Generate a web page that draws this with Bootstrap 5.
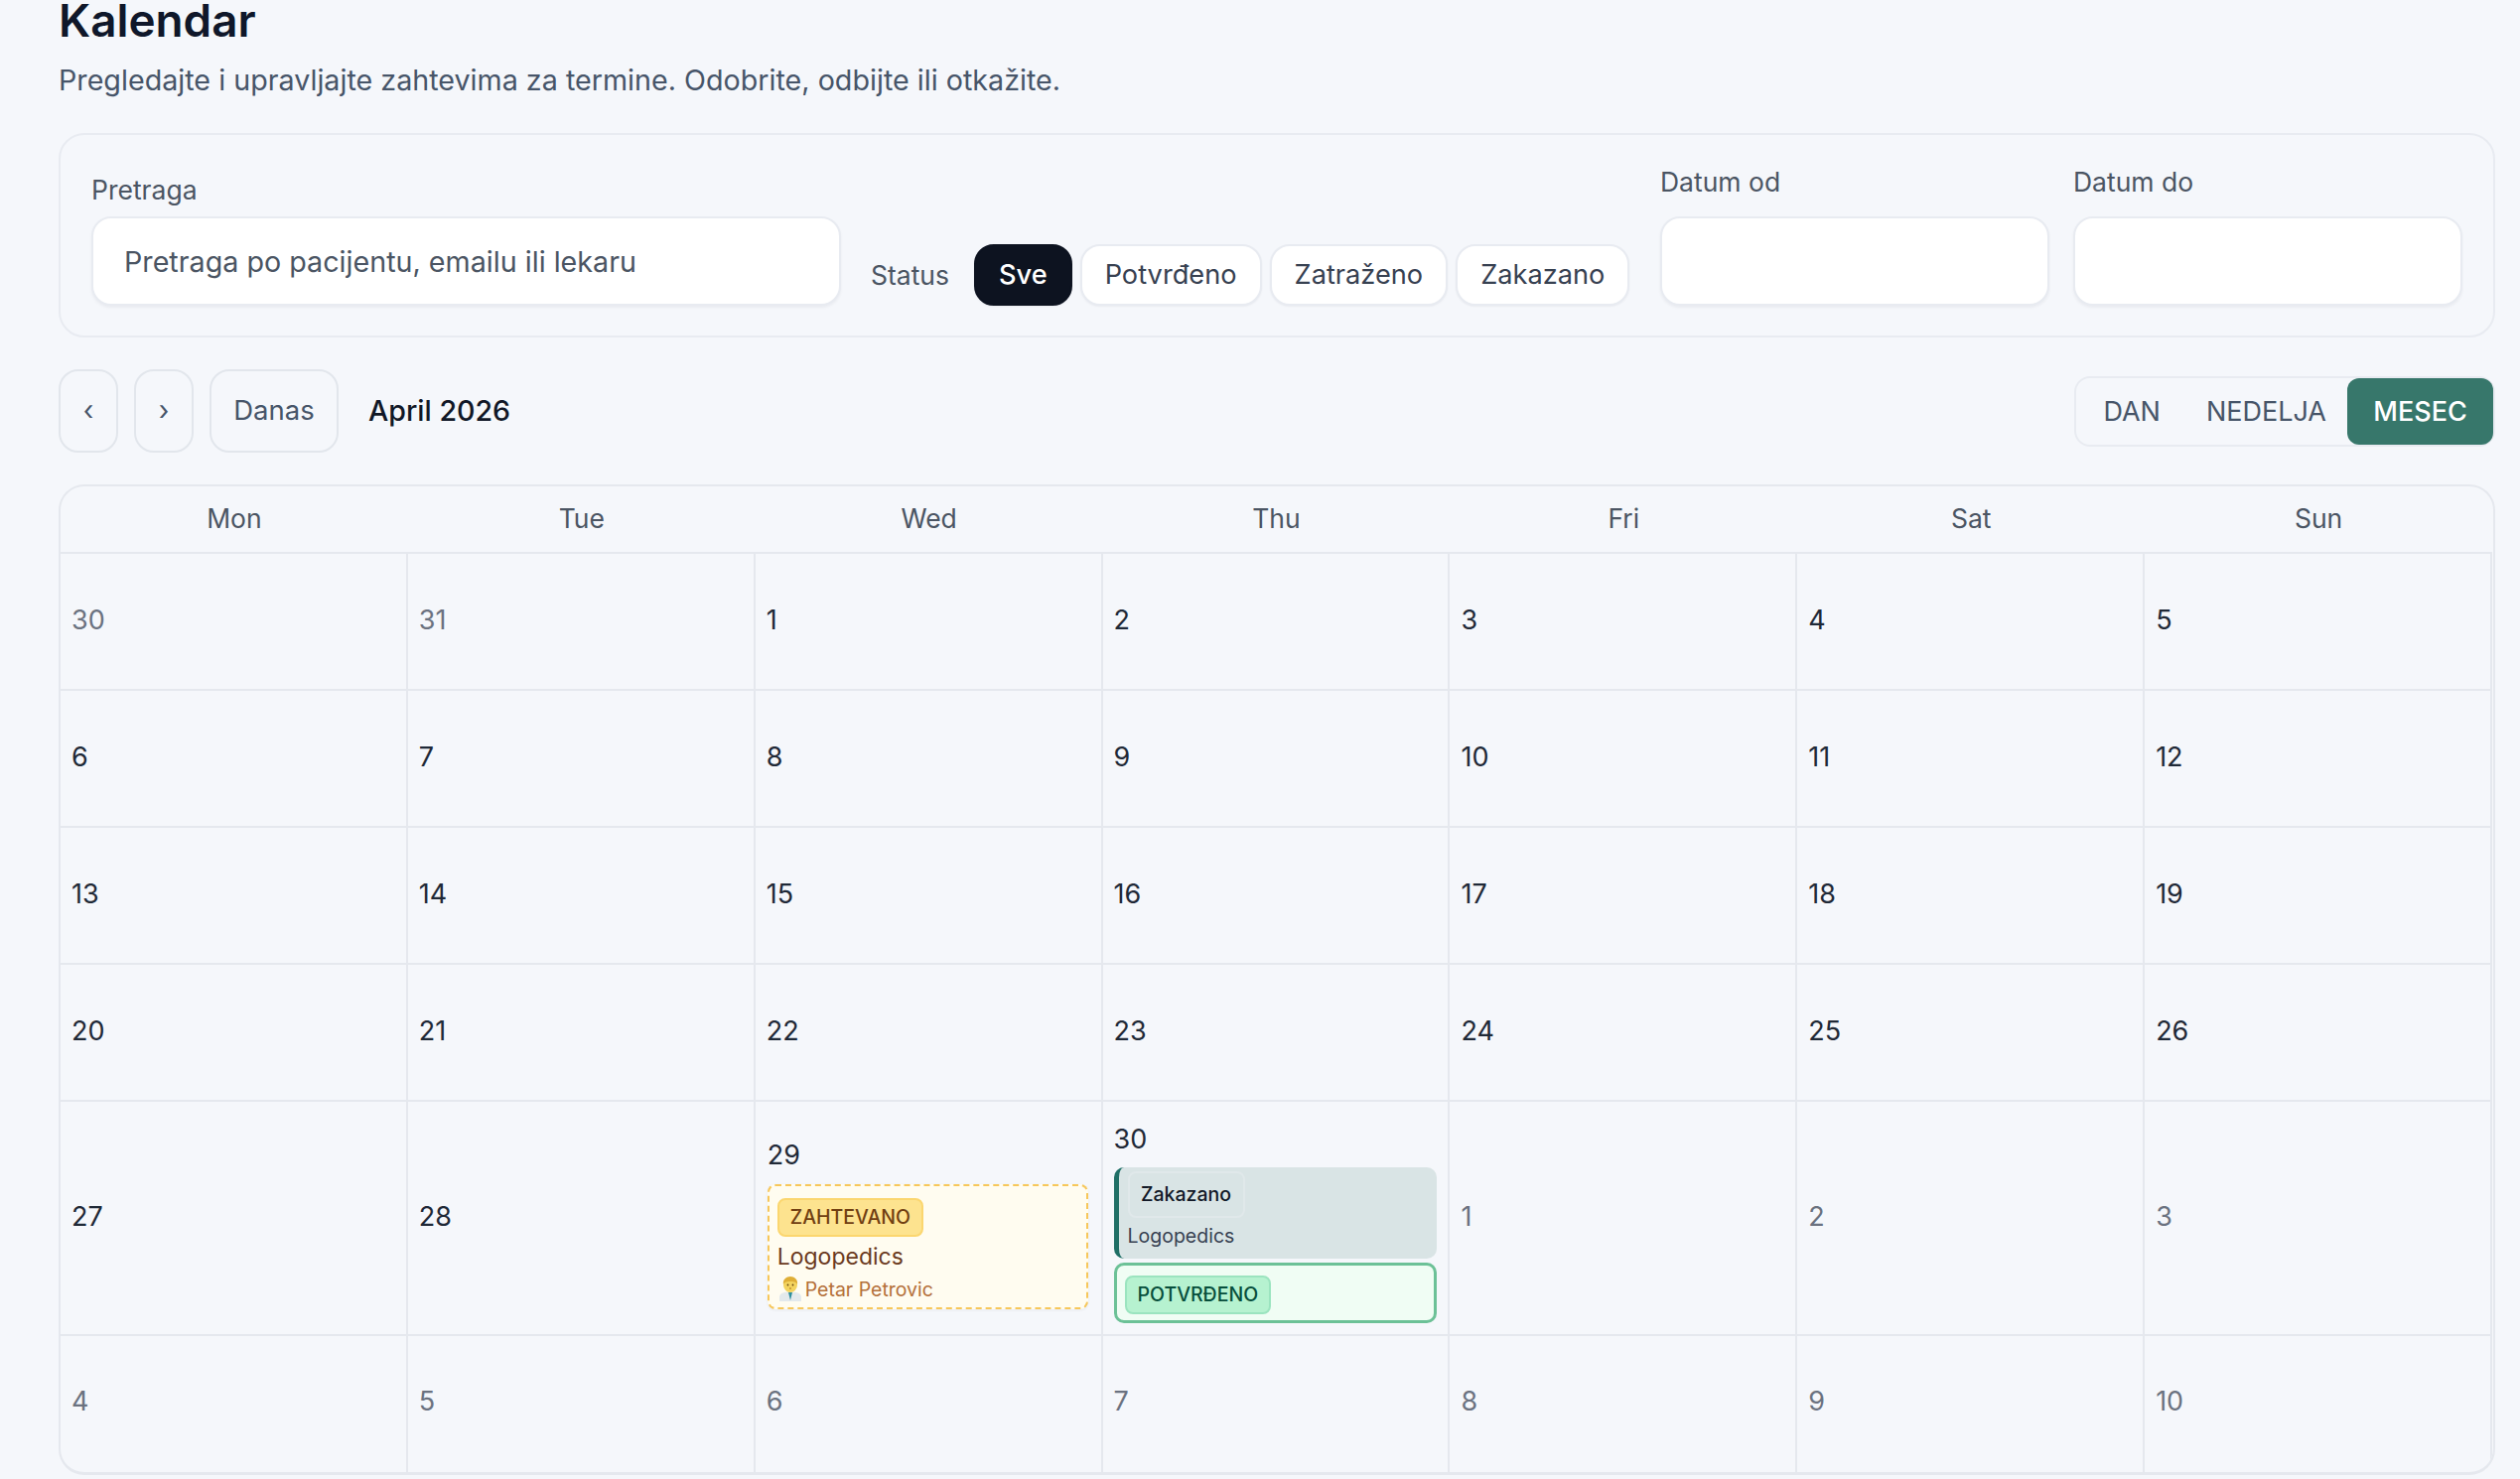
<!DOCTYPE html>
<html lang="sr">
<head>
<meta charset="utf-8">
<title>Kalendar</title>
<link href="https://cdn.jsdelivr.net/npm/bootstrap@5.3.0/dist/css/bootstrap.min.css" rel="stylesheet">
<style>
html,body{height:100%;overflow:hidden}
body{background:#f5f7fb;font-family:Inter,"Liberation Sans",sans-serif;color:#111827}
.page-wrap{padding:0 25px 0 59px}
.page-title{font-size:45.8px;font-weight:600;line-height:40px;margin:1px 0 0;color:#0f172a}
.page-sub{font-size:28.7px;line-height:40px;margin:20px 0 0;color:#475569}
.filter-panel{margin-top:33px;height:206px;border:2px solid #e8ebf1;border-radius:26px;padding:0 31px 30px 31px;background:#f5f7fb}
.field-label{font-size:26.5px;line-height:36px;color:#4b5563;margin:0}
.field-search{width:755px}
.field-search .field-label{margin-bottom:9px}
.field-date{width:392px}
.field-date .field-label{margin-bottom:17px}
.field-end{margin-left:24px}
.fld{height:90px;border:2px solid #e8ebf1;border-radius:20px;box-shadow:0 2px 3px rgba(15,23,42,.05);font-size:28.7px;padding:0 31px;color:#475569;background:#fff}
.fld::placeholder{color:#4b5563;opacity:1}
.status-wrap{gap:8px;margin-left:30px}
.status-lbl{font-size:26.5px;color:#4b5563;line-height:60px;margin-right:17px}
.pill{height:62px;padding:0 23px;border:2px solid #e8ebf1;border-radius:20px;background:#fff;font-size:27.2px;color:#374151;line-height:1;box-shadow:0 1px 2px rgba(15,23,42,.05)}
.pill-on,.pill-on:hover{background:#0d1320;border-color:#0d1320;color:#fff;font-weight:500}
.tool-row{margin-top:31px;height:86px}
.nav-btn{height:84px;border:2px solid #e2e6ec;border-radius:20px;background:transparent;font-size:27.5px;color:#475569;padding:0;line-height:1}
.nav-sq{width:60px}
.nav-txt{width:130px}
.month-name{font-size:28.6px;font-weight:500;color:#111827;margin-left:30px}
.seg-box{height:71px;border:2px solid #e8ebf1;border-radius:16px;padding:0}
.seg-btn{height:67px;border:0;border-radius:12px;font-size:27px;color:#475569;background:transparent;padding:0;line-height:1}
.seg-d{padding:0 23px 0 27px}
.seg-n{padding:0 21px 0 23px}
.seg-on,.seg-on:hover{background:#37776b;color:#fff;font-weight:500;width:147px;padding:0}
.cal-box{margin-top:31px;height:998px;border:2px solid #e5e8ee;border-bottom-width:3px;border-radius:26px;overflow:hidden;padding-right:1px}
.cal-grid{display:grid;grid-template-columns:repeat(7,1fr);grid-template-rows:68px 138px 138px 138px 138px 236px 137px}
.cal-head{display:flex;align-items:center;justify-content:center;font-size:26.5px;color:#4b5563;border-bottom:2px solid #e5e8ee}
.cal-cell{display:flex;flex-direction:column;justify-content:center;padding:0 13px 2px 11px;border-right:2px solid #e5e8ee;border-bottom:2px solid #e5e8ee;font-size:27px;min-width:0}
.cal-last{border-bottom:0;padding-bottom:6px}
.cal-ev{padding:12px 13px 0 12px}
.cal-ev2{padding:11px 11px 0 11px}
.dnum{line-height:32px;color:#1f2937}
.dim .dnum{color:#6b7280}
.ev-req{margin-top:13px;height:126px;background:#fffcf0;border:2px dashed #f7c75a;border-radius:8px;padding:12px 8px 0;box-shadow:0 1px 3px rgba(15,23,42,.06)}
.tag{display:block;width:fit-content;height:39px;line-height:35px;padding:0 11px;border-radius:8px;font-size:19.5px;font-weight:500;border:2px solid}
.tag-req{background:#fde38f;border-color:#fbd66f;color:#713f12}
.ev-svc{font-size:23px;line-height:30px;color:#6b3a1e;margin-top:5px}
.ev-doc{font-size:19.5px;line-height:26px;color:#b4703a;margin-top:5px;display:flex;align-items:center;gap:4px;padding-left:2px}
.ev-sched{margin-top:12px;height:92px;background:#d9e4e5;border-left:5px solid #1f6f66;border-radius:10px;padding:4px 0 0 9px}
.tag-sched{display:block;width:118px;height:47px;line-height:43px;text-align:center;border:2px solid #e0e8ea;border-radius:8px;font-size:19.5px;font-weight:500;color:#111827}
.ev-sub{font-size:19.5px;line-height:28px;margin-top:4px;color:#374151}
.ev-ok{margin-top:4px;height:61px;background:#f0fdf4;border:3px solid #6cc197;border-radius:10px;padding:10px 8px 0}
.tag-ok{background:#b6f2d0;border-color:#9be4bf;color:#064e3b}
</style>
</head>
<body>
<div class="page-wrap">
  <h1 class="page-title">Kalendar</h1>
  <p class="page-sub">Pregledajte i upravljajte zahtevima za termine. Odobrite, odbijte ili otkažite.</p>

  <div class="filter-panel d-flex align-items-end">
    <div class="d-flex align-items-end w-100">
      <div class="field-search">
        <label class="field-label d-block">Pretraga</label>
        <input class="form-control fld" type="text" placeholder="Pretraga po pacijentu, emailu ili lekaru">
      </div>
      <div class="d-flex align-items-center status-wrap">
        <span class="status-lbl">Status</span>
        <button class="btn pill pill-on">Sve</button>
        <button class="btn pill">Potvrđeno</button>
        <button class="btn pill">Zatraženo</button>
        <button class="btn pill">Zakazano</button>
      </div>
      <div class="field-date ms-auto">
        <label class="field-label d-block">Datum od</label>
        <input class="form-control fld" type="text">
      </div>
      <div class="field-date field-end">
        <label class="field-label d-block">Datum do</label>
        <input class="form-control fld" type="text">
      </div>
    </div>
  </div>

  <div class="tool-row d-flex align-items-center">
    <button class="btn nav-btn nav-sq">‹</button>
    <button class="btn nav-btn nav-sq ms-3">›</button>
    <button class="btn nav-btn nav-txt ms-3">Danas</button>
    <span class="month-name">April 2026</span>
    <div class="seg-box d-inline-flex align-items-center ms-auto">
      <button class="btn seg-btn seg-d">DAN</button>
      <button class="btn seg-btn seg-n">NEDELJA</button>
      <button class="btn seg-btn seg-on">MESEC</button>
    </div>
  </div>

  <div class="cal-box">
    <div class="cal-grid">
      <div class="cal-head">Mon</div><div class="cal-head">Tue</div><div class="cal-head">Wed</div><div class="cal-head">Thu</div><div class="cal-head">Fri</div><div class="cal-head">Sat</div><div class="cal-head">Sun</div>

      <div class="cal-cell dim"><div class="dnum">30</div></div><div class="cal-cell dim"><div class="dnum">31</div></div><div class="cal-cell"><div class="dnum">1</div></div><div class="cal-cell"><div class="dnum">2</div></div><div class="cal-cell"><div class="dnum">3</div></div><div class="cal-cell"><div class="dnum">4</div></div><div class="cal-cell"><div class="dnum">5</div></div>

      <div class="cal-cell"><div class="dnum">6</div></div><div class="cal-cell"><div class="dnum">7</div></div><div class="cal-cell"><div class="dnum">8</div></div><div class="cal-cell"><div class="dnum">9</div></div><div class="cal-cell"><div class="dnum">10</div></div><div class="cal-cell"><div class="dnum">11</div></div><div class="cal-cell"><div class="dnum">12</div></div>

      <div class="cal-cell"><div class="dnum">13</div></div><div class="cal-cell"><div class="dnum">14</div></div><div class="cal-cell"><div class="dnum">15</div></div><div class="cal-cell"><div class="dnum">16</div></div><div class="cal-cell"><div class="dnum">17</div></div><div class="cal-cell"><div class="dnum">18</div></div><div class="cal-cell"><div class="dnum">19</div></div>

      <div class="cal-cell"><div class="dnum">20</div></div><div class="cal-cell"><div class="dnum">21</div></div><div class="cal-cell"><div class="dnum">22</div></div><div class="cal-cell"><div class="dnum">23</div></div><div class="cal-cell"><div class="dnum">24</div></div><div class="cal-cell"><div class="dnum">25</div></div><div class="cal-cell"><div class="dnum">26</div></div>

      <div class="cal-cell"><div class="dnum">27</div></div>
      <div class="cal-cell"><div class="dnum">28</div></div>
      <div class="cal-cell cal-ev">
        <div class="dnum">29</div>
        <div class="ev-req">
          <span class="tag tag-req">ZAHTEVANO</span>
          <div class="ev-svc">Logopedics</div>
          <div class="ev-doc">
            <svg width="22" height="26" viewBox="0 0 22 26" aria-hidden="true"><path d="M0 25v-4c0-4 4-5.500 11-5.500s11 1.500 11 5.500v4z" fill="#e3e9ec"/><path d="M9 16l2 8 2-8z" fill="#2f8f9d"/><ellipse cx="11" cy="8.500" rx="7" ry="7.500" fill="#f3d35e"/><path d="M4 8c-1-5 3-8 7-8s8 3 7 8c-1-2-2-3-7-3S5 6 4 8z" fill="#dfae35"/><circle cx="8.500" cy="8.500" r=".9" fill="#6b4a12"/><circle cx="13.500" cy="8.500" r=".9" fill="#6b4a12"/><rect x="10" y="11.500" width="2" height="1" fill="#a8701f"/></svg>
            <span>Petar Petrovic</span>
          </div>
        </div>
      </div>
      <div class="cal-cell cal-ev2">
        <div class="dnum">30</div>
        <div class="ev-sched">
          <span class="tag-sched">Zakazano</span>
          <div class="ev-sub">Logopedics</div>
        </div>
        <div class="ev-ok"><span class="tag tag-ok">POTVRĐENO</span></div>
      </div>
      <div class="cal-cell dim"><div class="dnum">1</div></div><div class="cal-cell dim"><div class="dnum">2</div></div><div class="cal-cell dim"><div class="dnum">3</div></div>

      <div class="cal-cell cal-last dim"><div class="dnum">4</div></div><div class="cal-cell cal-last dim"><div class="dnum">5</div></div><div class="cal-cell cal-last dim"><div class="dnum">6</div></div><div class="cal-cell cal-last dim"><div class="dnum">7</div></div><div class="cal-cell cal-last dim"><div class="dnum">8</div></div><div class="cal-cell cal-last dim"><div class="dnum">9</div></div><div class="cal-cell cal-last dim"><div class="dnum">10</div></div>
    </div>
  </div>
</div>
<script src="https://cdn.jsdelivr.net/npm/bootstrap@5.3.0/dist/js/bootstrap.bundle.min.js"></script>
</body>
</html>
